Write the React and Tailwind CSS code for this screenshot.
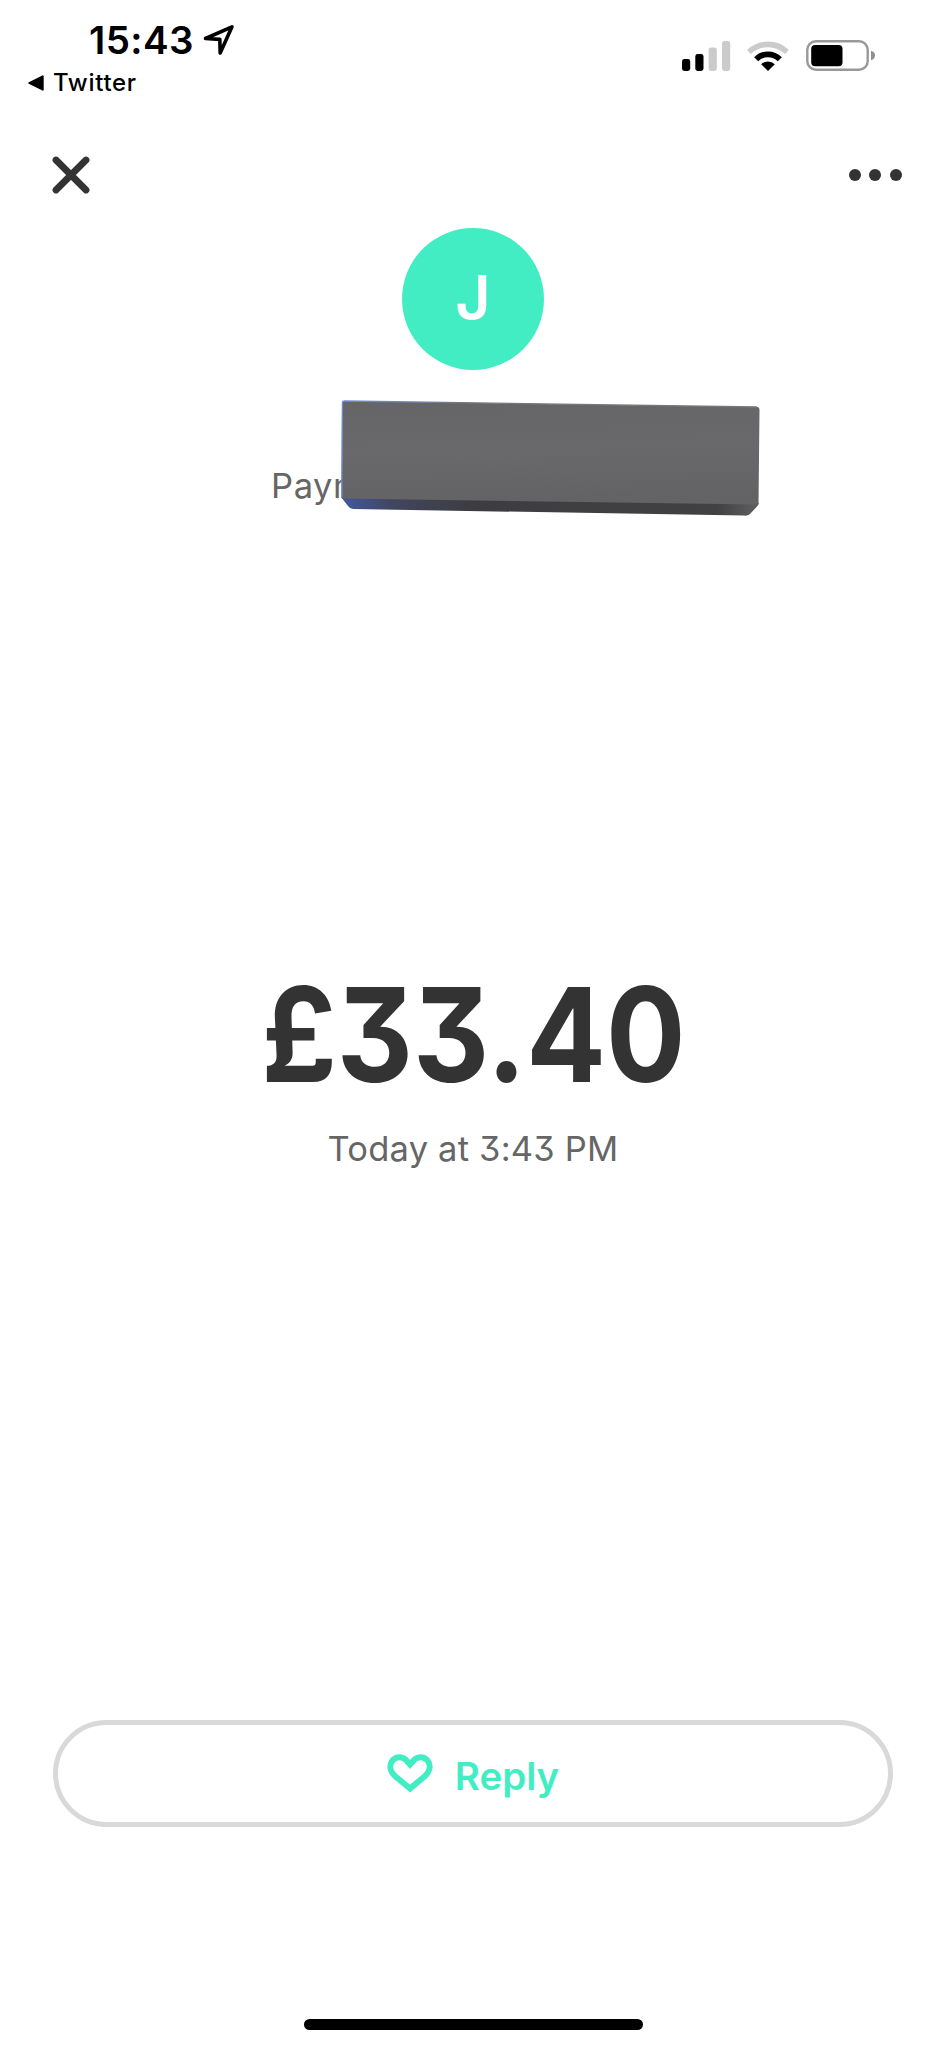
const signalBars = [
  { x: 0, y: 18, height: 12, fill: '#000' },
  { x: 13.3, y: 13, height: 17, fill: '#000' },
  { x: 26.6, y: 6.5, height: 23.5, fill: '#cbcbcb' },
  { x: 40, y: 0, height: 30, fill: '#cbcbcb' }
];

function SignalIcon() {
  return (
    <svg width="49" height="30" viewBox="0 0 49 30">
      {signalBars.map((bar) => (
        <rect key={bar.x} {...bar} width="8.2" rx="2.4" />
      ))}
    </svg>
  );
}

function WifiIcon() {
  return (
    <svg width="42" height="31" viewBox="0 0 42 31" fill="none">
      <path
        d="M2 12 A27.5 27.5 0 0 1 40 12"
        stroke="#cbcbcb"
        strokeWidth="5.6"
      />
      <path
        d="M9.2 19.2 A16.8 16.8 0 0 1 32.8 19.2"
        stroke="#000"
        strokeWidth="5.8"
      />
      <path d="M14.2 24.2 A9.7 9.7 0 0 1 27.8 24.2 L21 31 Z" fill="#000" />
    </svg>
  );
}

function BatteryIcon() {
  return (
    <svg width="70" height="31" viewBox="0 0 70 31">
      <rect
        x="1.3"
        y="1.3"
        width="60.4"
        height="28.4"
        rx="8.5"
        fill="none"
        stroke="#999"
        strokeWidth="2.4"
      />
      <rect x="5.2" y="5" width="31.3" height="21.3" rx="4" />
      <path d="M65 10.8 Q69 12 69 15.5 Q69 19 65 20.2 Z" fill="#8f8f8f" />
    </svg>
  );
}

function StatusBar() {
  return (
    <div className="flex h-[110px] justify-between pr-[70px] pl-7 text-black">
      <div className="flex flex-col">
        <div className="flex h-[60px] items-center pt-5 pl-[61px]">
          <span className="text-[38.5px] leading-10 font-semibold tracking-[0.4px]">
            15:43
          </span>
          <svg
            className="ml-[9px]"
            width="32"
            height="32"
            viewBox="0 0 32 32"
            fill="none"
            stroke="#000"
            strokeWidth="3.6"
            strokeLinejoin="round"
          >
            <path d="M2.5 14.5 L29 2.8 L17.2 29 L16.8 15.4 Z" />
          </svg>
        </div>
        <div className="mt-[7px] flex h-8 items-center gap-[9px]">
          <svg width="16" height="16" viewBox="0 0 16 16">
            <path
              d="M1.2 8 L14.8 1.2 V14.8 Z"
              stroke="#000"
              strokeWidth="1.8"
              strokeLinejoin="round"
            />
          </svg>
          <span className="text-2xl font-medium tracking-[0.7px]">Twitter</span>
        </div>
      </div>
      <div className="flex h-[111px] items-center">
        <SignalIcon />
        <div className="ml-4">
          <WifiIcon />
        </div>
        <div className="ml-[17px]">
          <BatteryIcon />
        </div>
      </div>
    </div>
  );
}

function Toolbar() {
  return (
    <header className="flex h-[118px] items-center justify-between pt-3 pr-[44px] pl-[52px] text-[#333]">
      <button type="button" aria-label="Close">
        <svg
          width="38"
          height="38"
          viewBox="0 0 38 38"
          stroke="currentColor"
          strokeWidth="6.8"
          strokeLinecap="round"
        >
          <path d="M4 4 L34 34 M34 4 L4 34" />
        </svg>
      </button>
      <button type="button" aria-label="More" className="flex gap-[8.7px]">
        <span className="size-3 rounded-full bg-[#333]" />
        <span className="size-3 rounded-full bg-[#333]" />
        <span className="size-3 rounded-full bg-[#333]" />
      </button>
    </header>
  );
}

function EraserBlock() {
  return (
    <svg width="419" height="117" viewBox="0 0 418 117" preserveAspectRatio="none">
      <defs>
        <linearGradient id="face" x1="0" y1="0" x2="0.1" y2="1">
          <stop offset="0" stopColor="#656567" />
          <stop offset="0.5" stopColor="#69696c" />
          <stop offset="1" stopColor="#636365" />
        </linearGradient>
        <linearGradient id="edge">
          <stop offset="0" stopColor="#4358a0" />
          <stop offset="0.12" stopColor="#414660" />
          <stop offset="0.3" stopColor="#3d3d41" />
          <stop offset="0.9" stopColor="#414143" />
          <stop offset="1" stopColor="#606062" />
        </linearGradient>
        <linearGradient id="rim">
          <stop offset="0" stopColor="#7189dc" />
          <stop offset="0.15" stopColor="#7580b4" />
          <stop offset="0.3" stopColor="#77777a" />
        </linearGradient>
      </defs>
      <path
        d="M0 97 L417 103 L415.5 106 L408 114 Q406 116 402 115.6 L12 109 Q9 109 7 106 Z"
        fill="url(#edge)"
      />
      <path
        d="M1 3 Q1 1 3 1 L415 7 Q417.5 7 417.5 10 L416.5 104.5 L1 98.5 L0.5 96 Z"
        fill="url(#face)"
      />
      <path
        d="M0.8 97 L1.4 3 Q1.4 1 3.5 1 L415 7"
        fill="none"
        stroke="url(#rim)"
        strokeWidth="1.3"
      />
    </svg>
  );
}

function Payee() {
  return (
    <section className="flex flex-col items-center">
      <div className="flex size-[142px] items-center justify-center rounded-full bg-[#43edc3] text-[61px] font-semibold text-white">
        <span className="-mt-0.5">J</span>
      </div>
      <div className="relative mt-[30px] h-[117px] w-[404px]">
        <p className="pt-[63px] text-[34.5px] leading-[46px] tracking-[0.6px] text-[#666]">
          Paym
        </p>
        <div className="absolute top-0 left-[70px]">
          <EraserBlock />
        </div>
      </div>
    </section>
  );
}

function Amount() {
  return (
    <section className="flex h-[1203px] flex-col items-center pt-[453px] [font-feature-settings:'cv09']">
      <h1 className="scale-x-90 text-[131px] leading-[130px] font-bold whitespace-nowrap text-[#333]">
        £33.40
      </h1>
      <p className="mt-[26px] text-[34.5px] leading-[46px] tracking-[0.2px] whitespace-nowrap text-[#666]">
        Today at 3:43 PM
      </p>
    </section>
  );
}

function ReplyButton() {
  return (
    <button
      type="button"
      className="mx-[53px] flex h-[107px] items-center justify-center rounded-full border-5 border-[#d9d9d9] text-[#43edc3]"
    >
      <svg
        className="mb-0.5"
        width="46"
        height="40"
        viewBox="0 0 46 40"
        fill="none"
        stroke="currentColor"
        strokeWidth="6"
      >
        <path d="M23 35.5 L8.5 23.5 C2.8 18.3 2 12 5.4 7.6 C9.3 3.2 15.5 3.5 19 7 L23 11.5 L27 7 C30.5 3.5 36.7 3.2 40.6 7.6 C44 12 43.2 18.3 37.5 23.5 Z" />
      </svg>
      <span className="mt-1.5 ml-[22px] text-[38.5px] font-semibold">
        Reply
      </span>
    </button>
  );
}

export default function App() {
  return (
    <div className="flex h-[2048px] w-[946px] flex-col overflow-hidden bg-white font-[Inter,sans-serif]">
      <StatusBar />
      <Toolbar />
      <Payee />
      <Amount />
      <ReplyButton />
      <div className="mx-auto mt-auto mb-[18px] h-[11px] w-[339px] rounded-full bg-black" />
    </div>
  );
}
